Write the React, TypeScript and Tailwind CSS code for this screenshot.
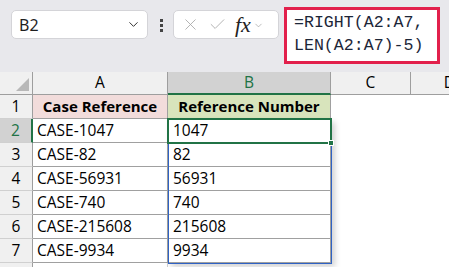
import { ChevronDown, X, Check } from 'lucide-react';

const rows = [
  ['CASE-1047', '1047'],
  ['CASE-82', '82'],
  ['CASE-56931', '56931'],
  ['CASE-740', '740'],
  ['CASE-215608', '215608'],
  ['CASE-9934', '9934'],
];

const cellFont = { fontFamily: '"Open Sans", "Noto Sans", sans-serif' };

export default function App() {
  return (
    <main className="relative h-[267px] w-[449px] overflow-hidden bg-white text-black">
      {/* formula bar area */}
      <div className="flex h-[72px] items-start bg-[#e8e8ec]" style={{ fontFamily: '"Noto Sans", sans-serif' }}>
        <div className="ml-[11px] mt-[10px] flex h-[29px] w-[137px] items-center justify-between rounded-[5px] border border-[#d4d4d8] bg-white pl-[7px] pr-[6px]">
          <span className="text-[16px] text-[#1f1f1f]">B2</span>
          <ChevronDown size={15} strokeWidth={1.6} className="text-[#333]" />
        </div>
        <div className="ml-[11px] mt-[19px] flex w-[4px] flex-col items-center gap-[2px]">
          <span className="h-[3px] w-[3px] bg-[#444]" />
          <span className="h-[3px] w-[3px] bg-[#444]" />
          <span className="h-[3px] w-[3px] bg-[#444]" />
        </div>
        <div className="ml-[10px] mt-[10px] flex h-[29px] w-[106px] items-center rounded-[5px] border border-[#d4d4d8] bg-white pl-[7px]">
          <X size={19} strokeWidth={1.1} className="text-[#a8a8a8]" />
          <Check size={19} strokeWidth={1.1} className="ml-[8px] text-[#a8a8a8]" />
          <span
            className="ml-[8px] text-[22px] italic leading-none text-[#222]"
            style={{ fontFamily: '"Liberation Serif", serif' }}
          >
            fx
          </span>
          <ChevronDown size={11} strokeWidth={1.4} className="ml-[2px] mt-[2px] text-[#999]" />
        </div>
        <div
          className="ml-[5px] mt-[7px] h-[57px] w-[156px] border-[3px] border-[#e2204c] bg-white pl-[7px] pt-[1px] text-[16.6px] leading-[23px] text-[#1c2638]"
          style={{ fontFamily: '"Liberation Mono", monospace' }}
        >
          <div>=RIGHT(A2:A7,</div>
          <div>LEN(A2:A7)-5)</div>
        </div>
      </div>

      {/* column headers */}
      <div className="flex h-[23px] text-[15.5px]" style={cellFont}>
        <div className="relative w-[33px] border-b border-r border-[#9e9e9e] bg-[#f0f0f0]">
          <div
            className="absolute bottom-[3px] right-[3px] h-[13px] w-[13px] bg-[#b8b8b8]"
            style={{ clipPath: 'polygon(100% 0, 100% 100%, 0 100%)' }}
          />
        </div>
        <div className="flex w-[135px] items-center justify-center border-b border-r border-[#9e9e9e] bg-[#f0f0f0]">A</div>
        <div className="flex w-[163px] items-center justify-center border-b-2 border-r border-b-[#217346] border-r-[#9e9e9e] bg-[#d2d2d2] text-[#217346]">
          B
        </div>
        <div className="flex w-[80px] items-center justify-center border-b border-r border-[#9e9e9e] bg-[#f0f0f0]">C</div>
        <div className="flex flex-1 items-center justify-end border-b border-[#9e9e9e] bg-[#f0f0f0]">
          <span className="-mr-[6px]">D</span>
        </div>
      </div>

      {/* header row 1 */}
      <div className="flex h-[24px] text-[15px]" style={cellFont}>
        <div className="flex w-[33px] items-center justify-center border-b border-r border-b-[#d0d0d0] border-r-[#9e9e9e] bg-[#f0f0f0] text-[15.5px]">
          1
        </div>
        <div className="flex w-[135px] items-center justify-center border-b border-r border-[#a0a0a0] bg-[#f2dcdb] font-bold">
          Case Reference
        </div>
        <div className="flex w-[163px] items-center justify-center border-b border-r border-[#a0a0a0] bg-[#d8e4bc] font-bold">
          Reference Number
        </div>
        <div className="flex-1 bg-white" />
      </div>

      {/* data rows */}
      {rows.map(([a, b], i) => {
        const selected = i === 0;
        return (
          <div key={a} className="flex h-[24px] text-[15.5px]" style={cellFont}>
            <div
              className={
                selected
                  ? 'flex w-[33px] items-center justify-center border-b border-r-2 border-b-[#d0d0d0] border-r-[#217346] bg-[#d2d2d2] text-[#217346]'
                  : 'flex w-[33px] items-center justify-center border-b border-r border-b-[#d0d0d0] border-r-[#9e9e9e] bg-[#f0f0f0]'
              }
            >
              {i + 2}
            </div>
            <div className="flex w-[135px] items-center border-b border-r border-[#a0a0a0] pl-[4px]">{a}</div>
            <div className="flex w-[163px] items-center border-b border-r border-[#a0a0a0] pl-[5px]">{b}</div>
            <div className="flex-1 bg-white" />
          </div>
        );
      })}

      {/* row below */}
      <div className="flex h-[10px]">
        <div className="w-[33px] border-r border-[#9e9e9e] bg-[#f0f0f0]" />
        <div className="w-[135px] border-r border-[#d0d0d0]" />
      </div>

      {/* spill range outline */}
      <div className="pointer-events-none absolute left-[168px] top-[119px] h-[145px] w-[164px] border border-[#2f62c4] shadow-[3px_3px_6px_rgba(0,0,0,0.18)]" />
      {/* active cell */}
      <div className="pointer-events-none absolute left-[167px] top-[118px] h-[26px] w-[165px] border-2 border-[#217346]">
        <div className="absolute -bottom-[4px] -right-[4px] h-[6px] w-[6px] border border-white bg-[#217346]" />
      </div>
    </main>
  );
}
